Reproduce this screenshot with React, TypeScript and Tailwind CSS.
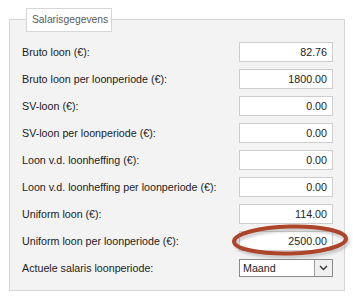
const rows = [
  { label: "Bruto loon (€):", value: "82.76" },
  { label: "Bruto loon per loonperiode (€):", value: "1800.00" },
  { label: "SV-loon (€):", value: "0.00" },
  { label: "SV-loon per loonperiode (€):", value: "0.00" },
  { label: "Loon v.d. loonheffing (€):", value: "0.00" },
  { label: "Loon v.d. loonheffing per loonperiode (€):", value: "0.00" },
  { label: "Uniform loon (€):", value: "114.00" },
  { label: "Uniform loon per loonperiode (€):", value: "2500.00" },
];

export default function App() {
  return (
    <div
      className="relative w-[353px] h-[298px] bg-white pt-[19px] pl-[9px] text-[10.7px] text-[#1b1b1b]"
      style={{ fontFamily: '"Liberation Sans", Arial, sans-serif' }}
    >
      <div className="relative w-[336px] h-[272px] border border-[#d6d6d6] bg-[#f3f3f3]">
        <div className="absolute left-[16px] top-[-12px] w-[86px] h-[24px] bg-white border border-[#d6d6d6] flex items-center pl-[5px] text-[10.3px] text-[#5a5a5a]">
          Salarisgegevens
        </div>

        <div className="flex flex-col gap-[7px] pt-[22px] pl-[12px] pr-[11px]">
          {rows.map((row) => (
            <div key={row.label} className="flex items-center justify-between h-[20px]">
              <span>{row.label}</span>
              <div className="w-[94px] h-[20px] bg-white border border-[#cdcdcd] flex items-center justify-end pr-[5px] text-[#1b1b1b]">
                {row.value}
              </div>
            </div>
          ))}
          <div className="flex items-center justify-between h-[20px]">
            <span>Actuele salaris loonperiode:</span>
            <div className="w-[94px] h-[18px] bg-white border border-[#8a8a8a] flex items-center">
              <span className="flex-1 pl-[3px] text-[#1b1b1b]">Maand</span>
              <div className="w-[18px] h-full border-l border-[#a0a0a0] bg-[#f0f0f0] flex items-center justify-center">
                <svg width="9" height="6" viewBox="0 0 9 6">
                  <path d="M1 1 L4.5 4.5 L8 1" fill="none" stroke="#333" strokeWidth="1.4" />
                </svg>
              </div>
            </div>
          </div>
        </div>
      </div>

      <svg
        className="absolute left-[226px] top-[220px] pointer-events-none"
        width="127"
        height="44"
        viewBox="0 0 127 44"
      >
        <defs>
          <filter id="sh" x="-20%" y="-40%" width="140%" height="180%">
            <feGaussianBlur stdDeviation="1.6" />
          </filter>
        </defs>
        <ellipse
          cx="66"
          cy="23"
          rx="56"
          ry="13.5"
          fill="none"
          stroke="#7a7a7a"
          strokeOpacity="0.45"
          strokeWidth="3"
          filter="url(#sh)"
          transform="rotate(-1.5 66 23)"
        />
        <ellipse
          cx="64"
          cy="20"
          rx="56"
          ry="13.5"
          fill="none"
          stroke="#ad452b"
          strokeWidth="4"
          transform="rotate(-1.5 64 20)"
        />
      </svg>
    </div>
  );
}
